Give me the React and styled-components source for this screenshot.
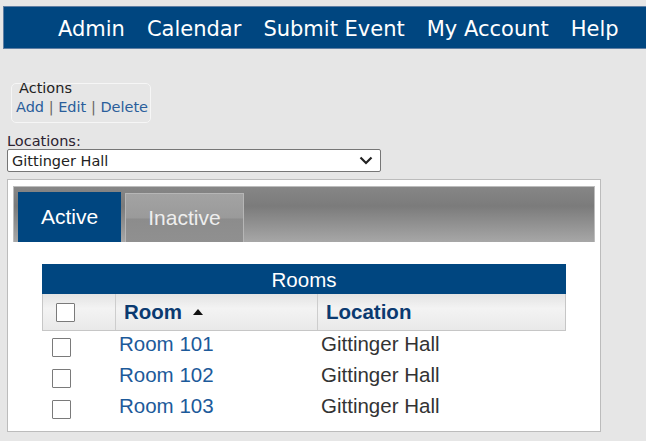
import React from 'react';
import styled, { createGlobalStyle } from 'styled-components';

const GlobalStyle = createGlobalStyle`
    html, body {
        margin: 0;
        padding: 0;
        background: #e6e6e6;
    }
    body {
        font-family: "DejaVu Sans", Verdana, sans-serif;
    }
`;

const NAVY = '#004680';

const Page = styled.div`
    padding-top: 6px;
`;

const NavBar = styled.nav`
    margin-left: 3px;
    display: flex;
    gap: 22px;
    height: 37px;
    padding: 4px 0 0 54px;
    background: ${NAVY};
    border: 1px solid #5f7ea3;
    border-right: none;
`;

const NavLink = styled.a`
    color: #fff;
    font-size: 21px;
    line-height: 37px;
    text-decoration: none;
    white-space: nowrap;
`;

const ActionsBox = styled.div`
    margin: 34px 0 0 11px;
    width: 140px;
    box-sizing: border-box;
    border: 1px solid #f6f6f6;
    border-radius: 5px;
    padding: 0 4px 8px;
    white-space: nowrap;
`;

const ActionsTitle = styled.div`
    margin-top: -3px;
    padding-left: 3px;
    font-size: 14.5px;
    line-height: 14px;
    color: #222;
`;

const ActionLinks = styled.div`
    margin-top: 5px;
    font-size: 14.5px;
    line-height: 14px;
    color: #666;
`;

const ActionLink = styled.a`
    color: #2a5e9b;
    text-decoration: none;
`;

const FieldLabel = styled.div`
    margin: 11px 0 0 7px;
    font-size: 14.5px;
    line-height: 15px;
    color: #2b2230;
`;

const SelectBox = styled.div`
    margin-left: 7px;
    width: 374px;
    height: 23px;
    box-sizing: border-box;
    display: flex;
    align-items: center;
    justify-content: space-between;
    padding: 0 7px 0 4px;
    border: 1px solid #767676;
    border-radius: 2px;
    background: #fff;
    font-size: 14.5px;
    color: #222;
`;

const Panel = styled.div`
    margin: 7px 0 0 7px;
    width: 594px;
    height: 253px;
    box-sizing: border-box;
    padding: 6px 5px 0;
    border: 1px solid #bcbcbc;
    background: #fff;
`;

const TabBar = styled.div`
    height: 56px;
    box-sizing: border-box;
    display: flex;
    align-items: flex-end;
    gap: 4px;
    padding-left: 4px;
    border: 1px solid #bdbdbd;
    border-bottom: none;
    background: linear-gradient(to bottom, #868686 0%, #7b7b7b 35%, #a7a7a7 100%);
`;

const Tab = styled.div`
    box-sizing: border-box;
    font-family: "Liberation Sans", Arial, sans-serif;
    font-size: 21px;
    height: ${p => (p.$active ? 50 : 49)}px;
    line-height: ${p => (p.$active ? 50 : 48)}px;
    padding: 0 ${p => (p.$active ? 23 : 22)}px;
    color: ${p => (p.$active ? '#fff' : '#eeeeee')};
    background: ${p =>
        p.$active
            ? NAVY
            : 'linear-gradient(to bottom, #a3a3a3 0%, #9a9a9a 50%, #8c8c8c 52%, #909090 100%)'};
    border: ${p => (p.$active ? 'none' : '1px solid #b6b6b6')};
    border-bottom: none;
`;

const RoomsTable = styled.div`
    margin: 22px 0 0 29px;
    width: 524px;
    font-family: "Liberation Sans", Arial, sans-serif;
`;

const Caption = styled.div`
    height: 30px;
    box-sizing: border-box;
    padding-top: 2px;
    line-height: 28px;
    text-align: center;
    font-size: 20.5px;
    color: #fff;
    background: ${NAVY};
`;

const HeaderRow = styled.div`
    display: grid;
    grid-template-columns: 72px 202px 1fr;
    height: 37px;
    box-sizing: border-box;
    border: 1px solid #c6c6c6;
    border-top: none;
    background: linear-gradient(to bottom, #e3e3e3 0%, #f3f3f3 40%, #e9e9e9 100%);
`;

const HeadCell = styled.div`
    border-left: ${p => (p.$first ? 'none' : '1px solid #cdcdcd')};
    padding-left: 8px;
    font-size: 20.5px;
    font-weight: bold;
    line-height: 36px;
    color: #0b3a70;
`;

const SortArrow = styled.svg`
    margin-left: 11px;
    vertical-align: 4px;
`;

const Row = styled.div`
    display: grid;
    grid-template-columns: 72px 202px 1fr;
    height: 31px;
`;

const Cell = styled.div`
    padding-left: 5px;
    font-size: 20.5px;
    line-height: 26px;
    color: ${p => (p.$link ? '#1c5a9a' : '#333')};
`;

const Check = styled.span`
    display: block;
    width: 19px;
    height: 19px;
    box-sizing: border-box;
    margin: ${p => p.$top}px 0 0 ${p => p.$left}px;
    border: 1px solid #7a7a7a;
    border-radius: 1px;
    background: #fff;
`;

const navItems = ['Admin', 'Calendar', 'Submit Event', 'My Account', 'Help'];

const rooms = [
    { name: 'Room 101', location: 'Gittinger Hall' },
    { name: 'Room 102', location: 'Gittinger Hall' },
    { name: 'Room 103', location: 'Gittinger Hall' },
];

const App = () => {
    return (
        <Page>
            <GlobalStyle />
            <NavBar>
                {navItems.map(item => (
                    <NavLink key={item} href="#">
                        {item}
                    </NavLink>
                ))}
            </NavBar>

            <ActionsBox>
                <ActionsTitle>Actions</ActionsTitle>
                <ActionLinks>
                    <ActionLink href="#">Add</ActionLink> |{' '}
                    <ActionLink href="#">Edit</ActionLink> |{' '}
                    <ActionLink href="#">Delete</ActionLink>
                </ActionLinks>
            </ActionsBox>

            <FieldLabel>Locations:</FieldLabel>
            <SelectBox>
                <span>Gittinger Hall</span>
                <svg width="14" height="9" viewBox="0 0 14 9">
                    <polyline
                        points="1.5,1.5 7,7 12.5,1.5"
                        fill="none"
                        stroke="#222"
                        strokeWidth="2.2"
                    />
                </svg>
            </SelectBox>

            <Panel>
                <TabBar>
                    <Tab $active>Active</Tab>
                    <Tab>Inactive</Tab>
                </TabBar>

                <RoomsTable>
                    <Caption>Rooms</Caption>
                    <HeaderRow>
                        <HeadCell $first>
                            <Check $top={9} $left={5} />
                        </HeadCell>
                        <HeadCell>
                            Room
                            <SortArrow width="10" height="6" viewBox="0 0 10 6">
                                <path d="M5 0 L10 6 H0 Z" fill="#111" />
                            </SortArrow>
                        </HeadCell>
                        <HeadCell>Location</HeadCell>
                    </HeaderRow>
                    {rooms.map(room => (
                        <Row key={room.name}>
                            <div>
                                <Check $top={7} $left={10} />
                            </div>
                            <Cell $link>{room.name}</Cell>
                            <Cell>{room.location}</Cell>
                        </Row>
                    ))}
                </RoomsTable>
            </Panel>
        </Page>
    );
};

export default App;
